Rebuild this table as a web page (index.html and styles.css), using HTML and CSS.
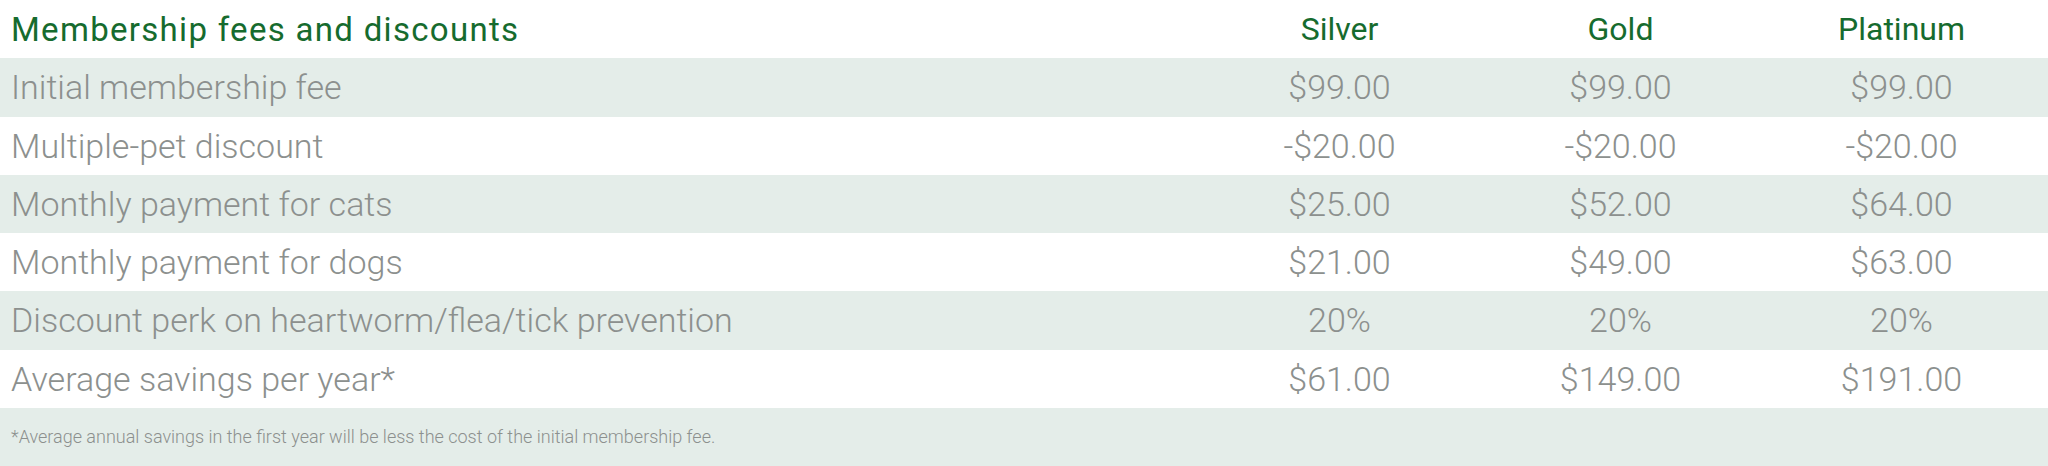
FILE: index.html
```html
<!DOCTYPE html>
<html lang="en">
<head>
<meta charset="utf-8">
<title>Membership fees and discounts</title>
<link rel="stylesheet" href="styles.css">
</head>
<body>
<div class="fees">
  <div class="row head">
    <div class="label title">Membership fees and discounts</div>
    <div class="cell">Silver</div>
    <div class="cell">Gold</div>
    <div class="cell">Platinum</div>
  </div>
  <div class="row tint">
    <div class="label">Initial membership fee</div>
    <div class="cell">$99.00</div>
    <div class="cell">$99.00</div>
    <div class="cell">$99.00</div>
  </div>
  <div class="row">
    <div class="label">Multiple-pet discount</div>
    <div class="cell">-$20.00</div>
    <div class="cell">-$20.00</div>
    <div class="cell">-$20.00</div>
  </div>
  <div class="row tint">
    <div class="label">Monthly payment for cats</div>
    <div class="cell">$25.00</div>
    <div class="cell">$52.00</div>
    <div class="cell">$64.00</div>
  </div>
  <div class="row">
    <div class="label">Monthly payment for dogs</div>
    <div class="cell">$21.00</div>
    <div class="cell">$49.00</div>
    <div class="cell">$63.00</div>
  </div>
  <div class="row tint">
    <div class="label">Discount perk on heartworm/flea/tick prevention</div>
    <div class="cell">20%</div>
    <div class="cell">20%</div>
    <div class="cell">20%</div>
  </div>
  <div class="row">
    <div class="label">Average savings per year*</div>
    <div class="cell">$61.00</div>
    <div class="cell">$149.00</div>
    <div class="cell">$191.00</div>
  </div>
  <div class="row tint note">
    <div class="label">*Average annual savings in the first year will be less the cost of the initial membership fee.</div>
  </div>
</div>
</body>
</html>
```
FILE: styles.css
```css
html, body {
  margin: 0;
  padding: 0;
  background: #ffffff;
}

.fees {
  display: grid;
  grid-template-rows: repeat(8, 1fr);
  height: 466px;
  font-family: Roboto, "Liberation Sans", sans-serif;
  font-weight: 300;
  color: #8c908e;
}

.row {
  display: grid;
  grid-template-columns: 1fr 281px 281px 281px;
  padding: 0 6px 0 11px;
  align-items: center;
  font-size: 34px;
  white-space: nowrap;
}

.row.tint {
  background: #e4ede9;
}

.head {
  color: #166b2e;
  font-weight: 400;
  font-size: 32px;
}

.title {
  font-size: 33px;
  letter-spacing: 1.3px;
}

.cell {
  text-align: center;
}

.note {
  grid-template-columns: 1fr;
  font-size: 18px;
}
```
